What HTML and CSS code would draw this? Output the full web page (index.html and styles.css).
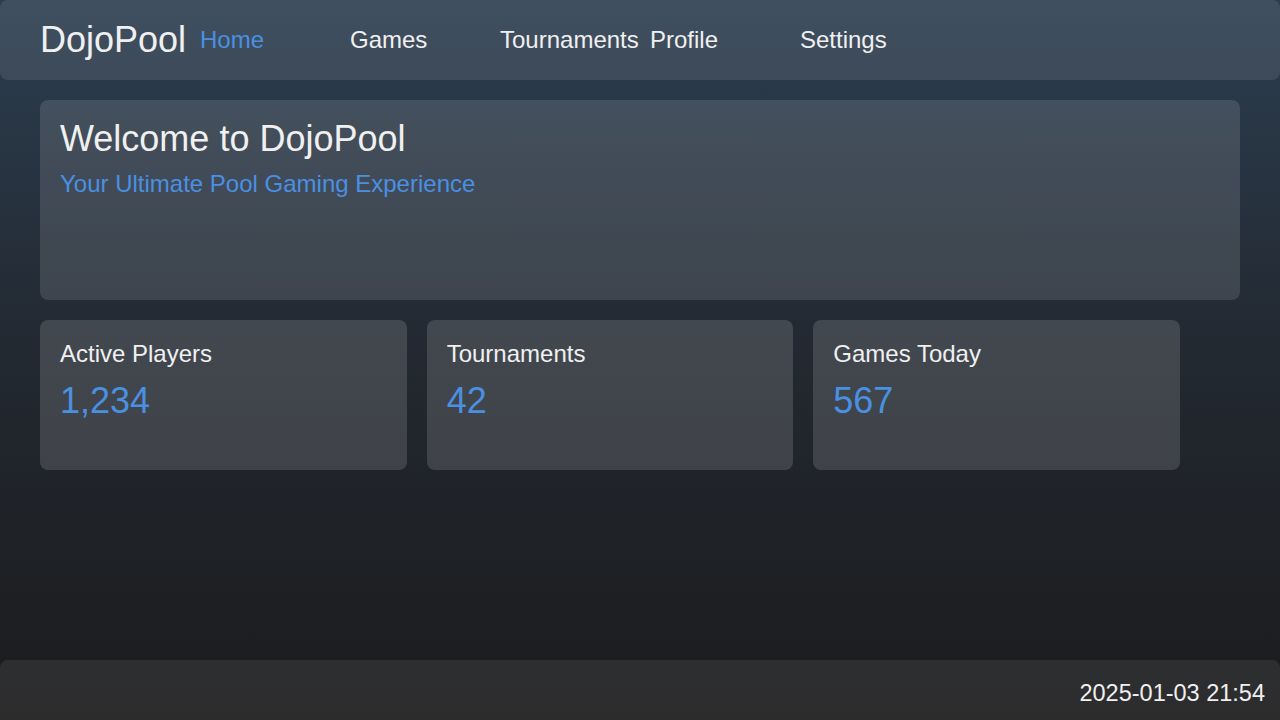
FILE: index.html
```html
<!DOCTYPE html>
<html lang="en">
<head>
<meta charset="utf-8">
<title>DojoPool</title>
<link rel="stylesheet" href="styles.css">
</head>
<body>
<div class="app">
  <header class="topbar">
    <div class="brand">DojoPool</div>
    <nav class="nav">
      <a class="nav-item active">Home</a>
      <a class="nav-item">Games</a>
      <a class="nav-item">Tournaments</a>
      <a class="nav-item">Profile</a>
      <a class="nav-item">Settings</a>
    </nav>
  </header>
  <main class="content">
    <section class="welcome">
      <h1 class="welcome-title">Welcome to DojoPool</h1>
      <p class="welcome-sub">Your Ultimate Pool Gaming Experience</p>
    </section>
    <section class="stats">
      <div class="stat">
        <div class="stat-label">Active Players</div>
        <div class="stat-value">1,234</div>
      </div>
      <div class="stat">
        <div class="stat-label">Tournaments</div>
        <div class="stat-value">42</div>
      </div>
      <div class="stat">
        <div class="stat-label">Games Today</div>
        <div class="stat-value">567</div>
      </div>
    </section>
  </main>
  <footer class="footer">
    <span class="clock">2025-01-03 21:54</span>
  </footer>
</div>
</body>
</html>
```
FILE: styles.css
```css
* { box-sizing: border-box; }
html, body { margin: 0; padding: 0; }
body {
  width: 1280px;
  height: 720px;
  overflow: hidden;
  font-family: "Liberation Sans", Arial, sans-serif;
  color: #f0f0f0;
  background: linear-gradient(180deg, #2c3e50 0%, #232a33 45%, #1b1b1c 100%);
}
.app {
  height: 720px;
  display: flex;
  flex-direction: column;
}
.topbar {
  height: 80px;
  flex: none;
  display: flex;
  align-items: center;
  padding-left: 40px;
  background: rgba(255, 255, 255, 0.09);
  border-radius: 8px;
}
.brand {
  font-size: 36px;
  width: 160px;
  flex: none;
}
.nav { display: flex; }
.nav-item {
  width: 150px;
  font-size: 24px;
  color: #f0f0f0;
  text-decoration: none;
  white-space: nowrap;
}
.nav-item.active { color: #4a90e2; }
.content {
  flex: 1;
  padding: 20px 40px 0;
  display: flex;
  flex-direction: column;
  gap: 20px;
}
.welcome {
  height: 200px;
  padding: 18px 20px;
  border-radius: 8px;
  background: rgba(255, 255, 255, 0.12);
}
.welcome-title {
  margin: 0;
  font-size: 36px;
  font-weight: normal;
  line-height: 41px;
}
.welcome-sub {
  margin: 11px 0 0;
  font-size: 24px;
  line-height: 28px;
  color: #4a90e2;
}
.stats {
  width: 1140px;
  display: grid;
  grid-template-columns: repeat(3, 1fr);
  gap: 20px;
}
.stat {
  height: 150px;
  padding: 20px 20px;
  border-radius: 8px;
  background: rgba(255, 255, 255, 0.14);
}
.stat-label {
  font-size: 24px;
  line-height: 28px;
}
.stat-value {
  margin-top: 12px;
  font-size: 36px;
  line-height: 41px;
  color: #4a90e2;
}
.footer {
  height: 60px;
  flex: none;
  display: flex;
  align-items: center;
  justify-content: flex-end;
  padding: 6px 15px 0 0;
  background: rgba(255, 255, 255, 0.08);
  border-radius: 8px 8px 0 0;
}
.clock { font-size: 23.5px; }
```
